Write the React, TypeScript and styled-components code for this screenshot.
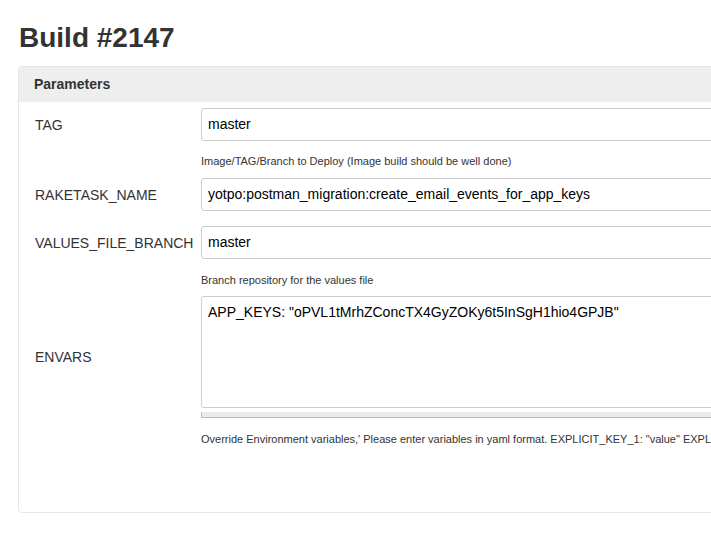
import styled, { createGlobalStyle } from "styled-components";

const GlobalStyle = createGlobalStyle`
  html, body {
    margin: 0;
    padding: 0;
    background: #fff;
    overflow: hidden;
  }
  body {
    font-family: "Liberation Sans", Arial, sans-serif;
    color: #333;
  }
`;

const Page = styled.div`
  padding-left: 18px;
  width: 1100px;
`;

const Title = styled.h1`
  margin: 22px 0 12px 1px;
  font-size: 28px;
  line-height: 32px;
  font-weight: 700;
  color: #333;
`;

const Panel = styled.section`
  border: 1px solid #e6e6e6;
  border-radius: 4px;
  padding-bottom: 65px;
`;

const PanelHeader = styled.div`
  background: #eeeeee;
  height: 35px;
  line-height: 35px;
  padding-left: 15px;
  font-size: 14px;
  font-weight: 700;
  color: #333;
  border-radius: 3px 3px 0 0;
`;

const ParamList = styled.div`
  padding-top: 6px;
`;

const ParamRow = styled.div<{ $gapAfter: number }>`
  display: grid;
  grid-template-columns: 182px 1fr;
  margin-bottom: ${(p) => p.$gapAfter}px;
`;

const Label = styled.div`
  grid-column: 1;
  grid-row: 1;
  align-self: center;
  padding-left: 16px;
  font-size: 14px;
  color: #333;
`;

const Field = styled.div`
  grid-column: 2;
  grid-row: 1;
`;

const TextInput = styled.div`
  box-sizing: border-box;
  height: 33px;
  line-height: 31px;
  border: 1px solid #ccc;
  border-radius: 3px;
  padding-left: 6px;
  font-size: 14px;
  color: #000;
`;

const TextArea = styled.div`
  box-sizing: border-box;
  height: 112px;
  border: 1px solid #ccc;
  border-radius: 3px;
  padding: 6px 6px;
  font-size: 14px;
  line-height: 18px;
  color: #000;
`;

const Grippie = styled.div`
  margin-top: 4px;
  height: 5px;
  background: #ebebeb;
  border-left: 1px solid #bbb;
  border-bottom: 1px solid #bbb;
`;

const Description = styled.div<{ $top: number }>`
  grid-column: 2;
  grid-row: 2;
  margin-top: ${(p) => p.$top}px;
  font-size: 11px;
  line-height: 16px;
  color: #333;
  white-space: nowrap;
`;

interface Param {
  name: string;
  value: string;
  multiline?: boolean;
  description?: string;
  descTop?: number;
  gapAfter: number;
}

const params: Param[] = [
  {
    name: "TAG",
    value: "master",
    description: "Image/TAG/Branch to Deploy (Image build should be well done)",
    descTop: 12,
    gapAfter: 9,
  },
  {
    name: "RAKETASK_NAME",
    value: "yotpo:postman_migration:create_email_events_for_app_keys",
    gapAfter: 15,
  },
  {
    name: "VALUES_FILE_BRANCH",
    value: "master",
    description: "Branch repository for the values file",
    descTop: 13,
    gapAfter: 8,
  },
  {
    name: "ENVARS",
    value: 'APP_KEYS: "oPVL1tMrhZConcTX4GyZOKy6t5InSgH1hio4GPJB"',
    multiline: true,
    description:
      'Override Environment variables,\' Please enter variables in yaml format. EXPLICIT_KEY_1: "value" EXPLICIT_KEY_2: "value"',
    descTop: 13,
    gapAfter: 0,
  },
];

export default function App() {
  return (
    <Page>
      <GlobalStyle />
      <Title>Build #2147</Title>
      <Panel>
        <PanelHeader>Parameters</PanelHeader>
        <ParamList>
          {params.map((p) => (
            <ParamRow key={p.name} $gapAfter={p.gapAfter}>
              <Label>{p.name}</Label>
              <Field>
                {p.multiline ? (
                  <>
                    <TextArea>{p.value}</TextArea>
                    <Grippie />
                  </>
                ) : (
                  <TextInput>{p.value}</TextInput>
                )}
              </Field>
              {p.description && (
                <Description $top={p.descTop ?? 12}>{p.description}</Description>
              )}
            </ParamRow>
          ))}
        </ParamList>
      </Panel>
    </Page>
  );
}
